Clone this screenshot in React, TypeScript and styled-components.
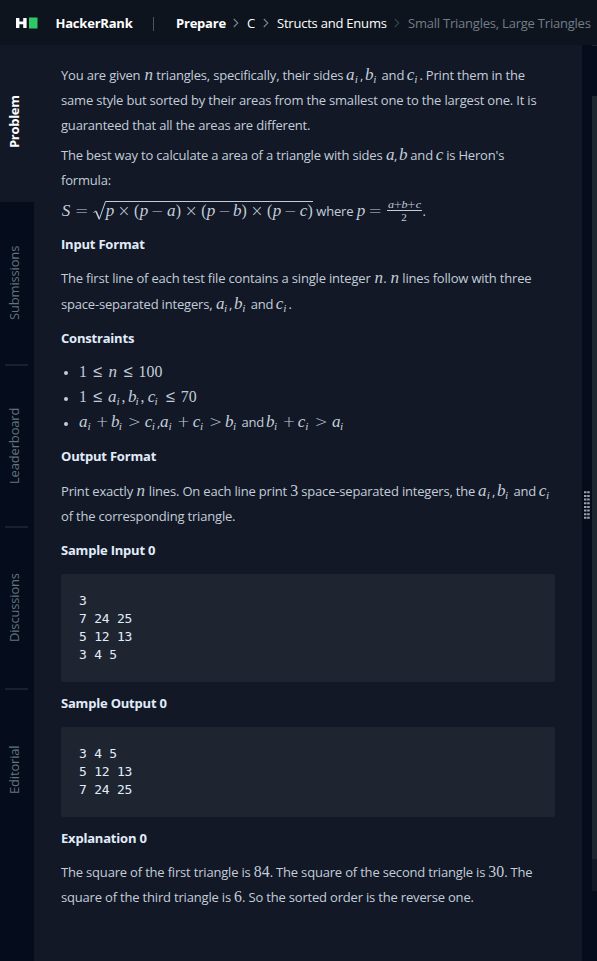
import React from "react";
import styled, { createGlobalStyle } from "styled-components";

const GlobalStyle = createGlobalStyle`
  * { box-sizing: border-box; }
  body { margin: 0; background: #050c1b; font-family: "Open Sans", sans-serif; overflow: hidden; }
`;

const Page = styled.div`
  display: flex;
  flex-direction: column;
  width: 597px;
  height: 961px;
  overflow: hidden;
`;

const Header = styled.header`
  display: flex;
  align-items: center;
  flex: none;
  height: 45px;
  padding-left: 16px;
  background: #0e141e;
  color: #fff;
  font-size: 13px;
  letter-spacing: -0.22px;
  white-space: nowrap;
`;

const Logo = styled.svg`
  flex: none;
  width: 22px;
  height: 12px;
  margin-right: 17.5px;
`;

const Divider = styled.span`
  width: 1px;
  height: 14px;
  margin: 3px 22px 0 20.5px;
  background: #4a5561;
`;

const Crumb = styled.span<{ $w: number; $bold?: boolean; $muted?: boolean }>`
  flex: none;
  width: ${(p) => p.$w}px;
  font-weight: ${(p) => (p.$bold ? 700 : 400)};
  color: ${(p) => (p.$muted ? "#737d87" : "#fff")};
`;

const Chevron = styled.svg<{ $dim?: boolean }>`
  flex: none;
  width: 6px;
  height: 10px;
  margin: 1px 8px 0 7px;
  fill: none;
  stroke: ${(p) => (p.$dim ? "#39424e" : "#7b8794")};
`;

const Body = styled.div`
  display: flex;
  flex: 1;
  min-height: 0;
`;

const Sidebar = styled.nav`
  display: flex;
  flex-direction: column;
  flex: none;
  width: 34px;
  background: #050c1b;
`;

const Tab = styled.div<{ $active?: boolean; $h: number }>`
  display: flex;
  flex-direction: column;
  align-items: center;
  flex: none;
  height: ${(p) => p.$h}px;
  padding-right: 7px;
  padding-bottom: ${(p) => (p.$active ? 4 : 0)}px;
  background: ${(p) => (p.$active ? "#121826" : "transparent")};
  color: ${(p) => (p.$active ? "#fff" : "#62757f")};
  font-weight: ${(p) => (p.$active ? 700 : 400)};
  font-size: 13px;
  letter-spacing: ${(p) => (p.$active ? -0.3 : -0.17)}px;
`;

const TabLabel = styled.span`
  display: flex;
  align-items: center;
  justify-content: center;
  flex: 1;
  writing-mode: vertical-rl;
  transform: rotate(180deg);
  line-height: 18px;
`;

const TabRule = styled.span`
  width: 23px;
  height: 2px;
  margin-left: 6px;
  background: #1a202d;
`;

const Content = styled.main`
  display: flex;
  flex-direction: column;
  flex: none;
  width: 548px;
  padding: 18px 27px 0;
  background: #121826;
  color: #c3cdd9;
`;

const Para = styled.div<{ $mt?: number }>`
  margin-top: ${(p) => p.$mt ?? 0}px;
`;

const Line = styled.div<{ $h?: number }>`
  height: ${(p) => p.$h ?? 25}px;
  line-height: ${(p) => p.$h ?? 25}px;
  font-size: 13px;
  letter-spacing: -0.185px;
  white-space: pre;
`;

const Heading = styled.h3`
  margin: 9px 0 0;
  font-size: 13px;
  line-height: 25px;
  font-weight: 700;
  letter-spacing: -0.2px;
  color: #e1ecfa;
`;

const List = styled.ul`
  margin: 8px 0 0;
  padding: 0;
  list-style: none;
`;

const Item = styled.li<{ $h: number }>`
  display: flex;
  align-items: center;
  height: ${(p) => p.$h}px;
`;

const Bullet = styled.span`
  width: 4px;
  height: 4px;
  margin: 2px 11px 0 3px;
  border-radius: 50%;
  background: #c3cdd9;
`;

const Code = styled.pre`
  margin: 11px 0 0;
  padding: 18px;
  width: 494px;
  border-radius: 2px;
  background: #1e2430;
  color: #e1ecfa;
  font: 13px/18px "DejaVu Sans Mono", monospace;
  letter-spacing: -0.25px;
`;

const MathBox = styled.span`
  display: inline-flex;
  align-items: baseline;
  font-family: "Liberation Serif", serif;
  font-size: 15.84px;
  line-height: 18px;
  letter-spacing: 0;
`;

const Glyph = styled.span<{ $w: number; $italic?: boolean }>`
  display: inline-flex;
  justify-content: center;
  width: ${(p) => p.$w}em;
  font-style: ${(p) => (p.$italic ? "italic" : "normal")};
  transform: ${(p) => (p.$italic ? "scaleX(1.08)" : "none")};
`;

const Comma = styled.span`
  width: 0.445em;
`;

const Operator = styled.span<{ $pad: number; $size: number }>`
  display: inline-flex;
  justify-content: center;
  width: 0.778em;
  margin: 0 ${(p) => p.$pad}em;

  > span {
    font-family: "DejaVu Sans", sans-serif;
    font-weight: 200;
    font-size: ${(p) => p.$size}em;
    line-height: 1;
  }
`;

const Sub = styled.span`
  display: inline-flex;
  position: relative;
  top: 0.22em;
  width: 0.455em;
  font-size: 0.72em;
  font-style: italic;
`;

const Radical = styled.span`
  display: inline-flex;
  align-items: baseline;
`;

const Surd = styled.svg`
  align-self: flex-start;
  width: 14px;
  height: 20px;
  fill: none;
  stroke: #c3cdd9;
`;

const Radicand = styled.span`
  display: inline-flex;
  align-items: baseline;
  border-top: 1px solid #c3cdd9;
`;

const Fraction = styled.span`
  display: inline-flex;
  flex-direction: column;
  align-items: center;
  vertical-align: middle;
  margin: 0 1px;
  width: 35px;
  font-size: 0.707em;
  line-height: 12px;
`;

const FractionBar = styled.span`
  width: 100%;
  height: 1px;
  background: #c3cdd9;
`;

const FormulaLine = styled.div`
  display: flex;
  align-items: center;
  height: 25px;
  font-size: 13px;
  letter-spacing: -0.18px;
  white-space: pre;
`;

const Splitter = styled.div`
  display: flex;
  align-items: center;
  justify-content: center;
  flex: none;
  width: 10px;
  background: #050c1b;
`;

const Grip = styled.svg`
  width: 6px;
  height: 30px;
  margin-top: 6px;
  margin-right: 1px;
  fill: #a0a3a9;
`;

const EditorEdge = styled.div`
  display: flex;
  flex-direction: column;
  width: 5px;
`;

const EdgeBlock = styled.div<{ $h: number; $c: string }>`
  height: ${(p) => p.$h}px;
  background: ${(p) => p.$c};
`;

const widths: Record<string, number> = {
  S: 0.645, a: 0.529, b: 0.429, c: 0.433, n: 0.6, p: 0.503,
  "(": 0.389, ")": 0.389,
};
const operators: Record<string, number> = {
  "=": 0.278, "≤": 0.278, ">": 0.278, "+": 0.222, "−": 0.222, "×": 0.222,
};

/* Typesets a small expression; "_" puts the subscript i after a letter. */
const Tokens = ({ src, tight }: { src: string; tight?: boolean }) => (
  <>
    {Array.from(src).map((ch, i) => {
      if (ch === "_") return <Sub key={i}>i</Sub>;
      if (ch === ",") return <Comma key={i}>,</Comma>;
      if (ch in operators)
        return (
          <Operator key={i} $pad={tight ? 0 : operators[ch]} $size={ch === "≤" || ch === "=" ? 1.04 : 0.97}>
            <span>{ch}</span>
          </Operator>
        );
      return <Glyph key={i} $w={widths[ch] ?? 0.5} $italic={/[a-zS]/.test(ch)}>{ch}</Glyph>;
    })}
  </>
);
const M = ({ children }: { children: string }) => (
  <MathBox><Tokens src={children} /></MathBox>
);

const Arrow = ({ dim }: { dim?: boolean }) => (
  <Chevron $dim={dim} viewBox="0 0 6 10"><path d="M.8 1l4 4-4 4" strokeWidth="1.1" /></Chevron>
);

export default function App() {
  return (
    <Page>
      <GlobalStyle />
      <Header>
        <Logo viewBox="0 0 22 12">
          <path d="M0 1h3.4v3.5h3.8V1h3.4v10H7.2V7.3H3.4V11H0z" fill="#fff" />
          <path d="M13 .5h8.5v11H13z" fill="#2ec866" />
        </Logo>
        <Crumb $w={77} $bold>HackerRank</Crumb>
        <Divider />
        <Crumb $w={50} $bold>Prepare</Crumb>
        <Arrow />
        <Crumb $w={9}>C</Crumb>
        <Arrow />
        <Crumb $w={110}>Structs and Enums</Crumb>
        <Arrow dim />
        <Crumb $w={184} $muted>Small Triangles, Large Triangles</Crumb>
      </Header>
      <Body>
        <Sidebar>
          <Tab $active $h={157}><TabLabel>Problem</TabLabel></Tab>
          <Tab $h={164}><TabLabel>Submissions</TabLabel><TabRule /></Tab>
          <Tab $h={162}><TabLabel>Leaderboard</TabLabel><TabRule /></Tab>
          <Tab $h={162}><TabLabel>Discussions</TabLabel><TabRule /></Tab>
          <Tab $h={160}><TabLabel>Editorial</TabLabel></Tab>
        </Sidebar>
        <Content>
          <Para>
            <Line>You are given <M>n</M> triangles, specifically, their sides <M>a_</M>, <M>b_</M> and <M>c_</M>. Print them in the</Line>
            <Line>same style but sorted by their areas from the smallest one to the largest one. It is</Line>
            <Line>guaranteed that all the areas are different.</Line>
          </Para>
          <Para $mt={5}>
            <Line>The best way to calculate a area of a triangle with sides <M>a</M>, <M>b</M> and <M>c</M> is Heron's</Line>
            <Line>formula:</Line>
          </Para>
          <Para $mt={5}>
            <FormulaLine>
              <MathBox>
                <Tokens src="S=" />
                <Radical>
                  <Surd viewBox="0 0 14 20">
                    <path d="M1.5 11.5L4 10" />
                    <path d="M4 10.2L7.2 17.8" strokeWidth="1.6" />
                    <path d="M7.2 18.5L13.5.5H14" />
                  </Surd>
                  <Radicand><Tokens src="p×(p−a)×(p−b)×(p−c)" /></Radicand>
                </Radical>
              </MathBox>
              {" where "}
              <M>p=</M>
              <MathBox>
                <Fraction>
                  <span><Tokens src="a+b+c" tight /></span>
                  <FractionBar />
                  <span>2</span>
                </Fraction>
              </MathBox>
              .
            </FormulaLine>
          </Para>
          <Heading>Input Format</Heading>
          <Para $mt={9}>
            <Line>The first line of each test file contains a single integer <M>n</M>. <M>n</M> lines follow with three</Line>
            <Line $h={26}>space-separated integers, <M>a_</M>, <M>b_</M> and <M>c_</M>.</Line>
          </Para>
          <Heading>Constraints</Heading>
          <List>
            <Item $h={26}><Bullet /><M>1≤n≤100</M></Item>
            <Item $h={25}><Bullet /><M>1≤a_,b_,c_≤70</M></Item>
            <Item $h={25}><Bullet /><Line><M>{"a_+b_>c_"}</M>,<M>{"a_+c_>b_"}</M> and <M>{"b_+c_>a_"}</M></Line></Item>
          </List>
          <Heading>Output Format</Heading>
          <Para $mt={10}>
            <Line>Print exactly <M>n</M> lines. On each line print <M>3</M> space-separated integers, the <M>a_</M>, <M>b_</M> and <M>c_</M></Line>
            <Line>of the corresponding triangle.</Line>
          </Para>
          <Heading>Sample Input 0</Heading>
          <Code>{"3\n7 24 25\n5 12 13\n3 4 5"}</Code>
          <Heading>Sample Output 0</Heading>
          <Code>{"3 4 5\n5 12 13\n7 24 25"}</Code>
          <Heading>Explanation 0</Heading>
          <Para $mt={9}>
            <Line>The square of the first triangle is <M>84</M>. The square of the second triangle is <M>30</M>. The</Line>
            <Line>square of the third triangle is <M>6</M>. So the sorted order is the reverse one.</Line>
          </Para>
        </Content>
        <Splitter>
          <Grip viewBox="0 0 6 30">
            {[0, 1, 2, 3, 4, 5, 6, 7].map((i) => (
              <path key={i} d={`M0 ${i * 3.65 + 0.3}h2.5v2H0zM3.2 ${i * 3.65 + 0.3}h2.5v2H3.2z`} />
            ))}
          </Grip>
        </Splitter>
        <EditorEdge>
          <EdgeBlock $h={1} $c="#1e2630" />
          <EdgeBlock $h={50} $c="#050c1b" />
          <EdgeBlock $h={763} $c="#1e2630" />
          <EdgeBlock $h={32} $c="#121826" />
        </EditorEdge>
      </Body>
    </Page>
  );
}
